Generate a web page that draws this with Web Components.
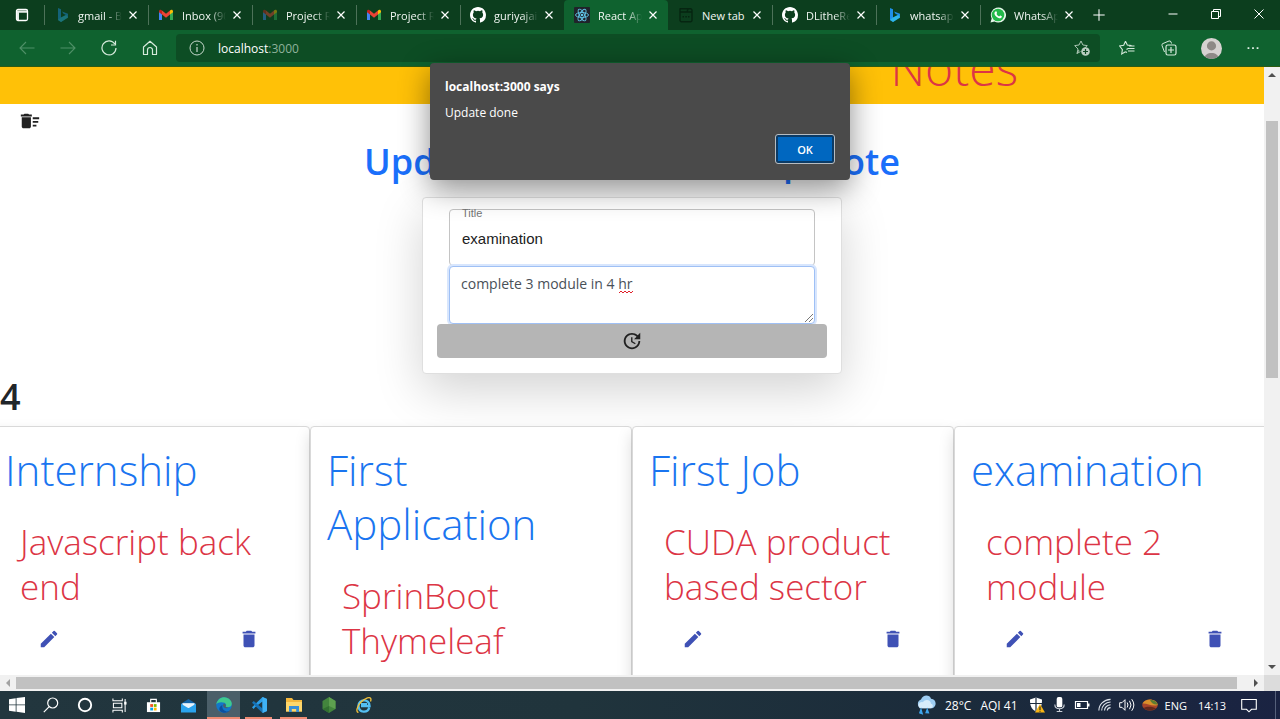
<!DOCTYPE html>
<html lang="en">
<head>
<meta charset="utf-8">
<meta name="viewport" content="width=device-width, initial-scale=1">
<title>React App</title>
<style>
  html, body { margin: 0; height: 100%; }
  body { font-family: "Open Sans", "Noto Sans", sans-serif; font-size: 12px; overflow: hidden; }
</style>
</head>
<body>
<desktop-screen></desktop-screen>

<script>
const ICONS = {
  tabs: '<rect x="2.5" y="2.5" width="11" height="11" rx="1.5" fill="none" stroke="#fff" stroke-width="1.3"/><path d="M2.5 3.5h11v2.200h-11zM2.500 5h2.500v8h-2.500z" fill="#fff" opacity=".9"/>',
  bing: '<path d="M4 1l3 1.200v8.300l5-2.600-2.500-1.200L8 4.500l6 2.300v3.500L7 15l-3-2z" fill="#1f8fe8"/><path d="M7 10.500l5-2.600L14 10v.8L7 15l-3-2z" fill="#35c6e8" opacity=".7"/>',
  gmail: '<path d="M1 4v9h3V7z" fill="#4285f4"/><path d="M12 7v6h3V4z" fill="#34a853"/><path d="M4 3.500L8 6.700l4-3.200v4L8 10.700 4 7.500z" fill="#ea4335"/><path d="M1 4.500C1 2.500 3 2.500 4 3.500v4L1 5.300z" fill="#c5221f"/><path d="M15 4.500c0-2-2-2-3-1v4l3-2.200z" fill="#fbbc04"/>',
  github: '<path fill="#fff" d="M8 0C3.580 0 0 3.580 0 8c0 3.540 2.290 6.530 5.470 7.590.4.070.55-.17.55-.38v-1.490c-2.230.48-2.700-.95-2.700-.95-.36-.92-.89-1.170-.89-1.170-.73-.5.05-.49.05-.49.8.060 1.230.83 1.230.83.71 1.230 1.870.87 2.330.66.070-.52.28-.87.51-1.070-1.780-.2-3.640-.89-3.640-3.950 0-.87.31-1.590.82-2.150-.08-.2-.36-1.020.08-2.120 0 0 .67-.21 2.200.82a7.600 7.600 0 014 0c1.530-1.040 2.200-.82 2.200-.82.44 1.100.16 1.920.08 2.120.51.56.82 1.270.82 2.150 0 3.070-1.870 3.750-3.650 3.950.29.25.54.73.54 1.480v2.200c0 .21.15.46.55.38A8 8 0 0016 8c0-4.420-3.580-8-8-8z"/>',
  react: '<rect width="16" height="16" rx="1" fill="#20232a"/><g fill="none" stroke="#61c5e8" stroke-width=".9"><ellipse cx="8" cy="8" rx="6.500" ry="2.500"/><ellipse cx="8" cy="8" rx="6.500" ry="2.500" transform="rotate(60 8 8)"/><ellipse cx="8" cy="8" rx="6.500" ry="2.500" transform="rotate(120 8 8)"/></g><circle cx="8" cy="8" r="1.300" fill="#61c5e8"/>',
  newtab: '<g fill="none" stroke="#062511" stroke-width="1.400"><path d="M2.500 1.700h10a1.500 1.500 0 011.500 1.500v10a1.500 1.500 0 01-1.500 1.500H3.500A1.500 1.500 0 012 13.200V2zM2 5h7l1-3M9 5h5"/></g><path d="M4.500 9h1.500v1.500H4.500zM7.300 9h1.500v1.500H7.300zM10 9h1.500v1.500H10z" fill="#062511"/>',
  whatsapp: '<path d="M.5 15.500l1.200-4A7.600 7.600 0 118 15.600a8 8 0 01-3.500-1z" fill="#e6f7ea"/><circle cx="8" cy="8" r="6.300" fill="#22b94a"/><path d="M5.500 4.500c.7-.4 1 0 1.500 1.300.2.700-.6.900-.5 1.300.6 1.200 1.500 1.900 2.600 2.300.5 0 .8-1 1.300-.8 1.400.6 1.700.8 1.400 1.400-.5 1.300-2 1.500-3.300 1C6.500 10.300 5 8.500 4.500 7c-.2-1 .2-2 1-2.500z" fill="#fff"/>',
  close: '<path d="M4 4l8 8M12 4l-8 8" stroke="#fff" stroke-width="1.400"/>',
  plus: '<path d="M8 1.500v13M1.500 8h13" stroke="#fff" stroke-width="1.200"/>',
  min: '<path d="M3.500 8h9" stroke="#fff"/>',
  restore: '<path d="M3.500 5.500h7v7h-7zM5.500 5.500v-2h7v7h-2" fill="none" stroke="#fff"/>',
  winclose: '<path d="M3.500 3.500l9 9M12.500 3.500l-9 9" stroke="#fff"/>',
  back: '<path d="M15.500 8H1M7 2L1 8l6 6" fill="none" stroke="#4f9068" stroke-width="1.100"/>',
  forward: '<path d="M.5 8H15M9 2l6 6-6 6" fill="none" stroke="#4f9068" stroke-width="1.100"/>',
  reload: '<path d="M13.800 4A7 7 0 1015 8M14.500 .8V5h-4.500" fill="none" stroke="#d5eadb" stroke-width="1.200"/>',
  home: '<path d="M1.500 7L8 1.300 14.500 7v7.500h-4V10a2.500 2.500 0 00-5 0v4.500h-4z" fill="none" stroke="#d5eadb" stroke-width="1.200" stroke-linejoin="round"/>',
  info: '<circle cx="8" cy="8" r="7" fill="none" stroke="#c5d8cb"/><path d="M8 7v5M8 4v1.500" stroke="#c5d8cb" stroke-width="1.200"/>',
  staradd: '<path d="M7 1l1.900 4 4.400.6-3.200 3M5 10l-2 3.500 1-4.500L.7 5.600 5 5 7 1M3 13.500l3.500-2" fill="none" stroke="#a9c4b1"/><circle cx="11.500" cy="11.500" r="4.300" fill="#b9cdbf"/><path d="M11.500 9v5M9 11.500h5" stroke="#0e4a24" stroke-width="1.200"/>',
  favs: '<path d="M6.500 1.200L8.300 5l4.200.6M9 8.500l-1.500 1M6.500 11.800L2.700 14l.7-4.300L.6 6l4.100-.8 1.800-4M9 8.500h6.500M9 11h6.500M10 6h5.500M6.500 11.800L8 12.500" fill="none" stroke="#d5eadb" stroke-width="1.100"/>',
  collections: '<path d="M3.500 12L1 5.500Q.5 4 2 3.500L8 1q1.500-.5 2 1l.5 1.500" fill="none" stroke="#d5eadb"/><rect x="5" y="5" width="10" height="10" rx="1.800" fill="none" stroke="#d5eadb" stroke-width="1.200"/><path d="M10 7v6M7 10h6" stroke="#d5eadb" stroke-width="1.200"/>',
  avatar: '<clipPath id="c"><circle cx="8" cy="8" r="8"/></clipPath><g clip-path="url(#c)"><path d="M0 0h16v16H0z" fill="#d6d2d1"/><circle cx="8" cy="6" r="3.500" fill="#8e8987"/><path d="M2.500 16c0-6 11-6 11 0z" fill="#8e8987"/></g>',
  dots: '<path d="M1.800 7.200h2v2h-2zM7 7.200h2v2H7zM12.200 7.200h2v2h-2z" fill="#e4f1e8"/>',
  sweep: '<path d="M15 16h4v2h-4zm0-8h7v2h-7zm0 4h6v2h-6zM3 18c0 1.100.9 2 2 2h6c1.100 0 2-.9 2-2V8H3v10zM14 5h-3l-1-1H6L5 5H2v2h12z" fill="#212121"/>',
  update: '<path d="M21 10.120h-6.780l2.740-2.820c-2.730-2.700-7.150-2.800-9.880-.1-2.730 2.710-2.730 7.080 0 9.790s7.150 2.710 9.880 0C18.320 15.650 19 14.080 19 12.100h2c0 1.980-.88 4.550-2.640 6.290-3.510 3.480-9.210 3.480-12.720 0-3.500-3.470-3.530-9.110-.02-12.580s9.140-3.470 12.650 0L21 3v7.120zM12.500 8v4.250l3.500 2.080-.72 1.210L11 13V8h1.500z" fill="#212121"/>',
  edit: '<path d="M3 17.250V21h3.750L17.810 9.940l-3.750-3.750L3 17.250zM20.710 7.040a1 1 0 000-1.410l-2.340-2.340a1 1 0 00-1.410 0l-1.830 1.830 3.750 3.750 1.830-1.830z" fill="#3f51b5"/>',
  trash: '<path d="M6 19c0 1.100.9 2 2 2h8c1.100 0 2-.9 2-2V7H6v12zM19 4h-3.500l-1-1h-5l-1 1H5v2h14V4z" fill="#3f51b5"/>',
  windows: '<path d="M0 2.200L6.700 1.200v6.300H0zM7.500 1.100L16 0v7.500H7.500zM0 8.300h6.700v6.400L0 13.800zM7.500 8.300H16V16l-8.500-1.200z" fill="#fff"/>',
  search: '<circle cx="9.700" cy="6" r="5" fill="none" stroke="#fff" stroke-width="1.200"/><path d="M6.200 9.700L.8 15.200" stroke="#fff" stroke-width="1.200"/>',
  cortana: '<circle cx="8" cy="8" r="6.200" fill="none" stroke="#fff" stroke-width="1.900"/>',
  taskview: '<path d="M1 .5V3h10V.5M1 15.500V13h10v2.500M1.500 5.500h9v5h-9zM14 1v14" fill="none" stroke="#fff" stroke-width="1.100"/><path d="M13 4h2.500v3H13z" fill="#fff"/>',
  store: '<path d="M5 5V1.500h6V5" fill="none" stroke="#fff" stroke-width="1.200"/><path d="M1 4.500h14V15H1z" fill="#fff"/><path d="M4.500 6.500h3v3h-3z" fill="#f25022"/><path d="M8.300 6.500h3v3h-3z" fill="#7fba00"/><path d="M4.500 10.300h3v3h-3z" fill="#00a4ef"/><path d="M8.300 10.300h3v3h-3z" fill="#ffb900"/>',
  mail: '<path d="M0 6l8-5 8 5v9H0z" fill="#1565a8"/><path d="M1.500 5.500h13V11h-13z" fill="#e8f4fd"/><path d="M0 6l8 5 8-5v9.500H0z" fill="#2aa3ee"/>',
  edge: '<circle cx="8" cy="8" r="7.800" fill="#1377c9"/><path d="M.3 7.500C1 2.500 5 0 8.500.2c4 .2 7.500 3.300 7.300 6.800C15.700 10 12 11 9.500 9.800c1-1 1-3-1-4C6 4.700 1.500 5 .3 7.500z" fill="#3fc98e"/><path d="M6.500 8c-1 3 1 6 4 6.500 2 .2 3.500-.7 4.200-1.700C12.500 16 7 17 4 14c-1.500-2-.5-5 2.500-6z" fill="#0c4f9e"/><path d="M8 6.500c1.500.3 2.200 1.800 1.500 3 .6.900 2 1.300 3.500 1.100-2 1.200-5.300.8-5.800-1.300-.1-1.200 0-2 .8-2.800z" fill="#4b5f69"/>',
  vscode: '<path d="M11.500 0L16 2v12l-4.500 2V4.500L4 10.300 2.700 11.900 1 10.300 11.500 0z" fill="#2c9fe8"/><path d="M1 5.700L2.700 4.100 11.500 11.500V16z" fill="#1673b8"/><path d="M11.500 0L16 2v12l-4.500 2z" fill="#3fb2f5"/>',
  explorer: '<path d="M0 1h6l1.500 2H16v11.500H0z" fill="#f5b83d"/><path d="M0 5h16v9.500H0z" fill="#ffd76b"/><path d="M3 15V9h10v6h-2.800v-3H5.800v3z" fill="#3a8fd6"/>',
  node: '<path d="M8 0l6.500 4v8L8 16l-6.500-4V4z" fill="#43853d"/><path d="M8 0l6.500 4v8L8 9z" fill="#5da04f"/><path d="M1.500 12L8 9v7z" fill="#327031"/>',
  ie: '<path d="M13.200 10.500C12 16 3 16.500 2.500 9 2.300 2 13.500 1 13.500 9H5M5 7.200h6" fill="none" stroke="#54bff2" stroke-width="2.400"/><path d="M2.500 15.500C-1.500 15 2.500 5 9.500 1.800 13.500-.2 16 .6 14.500 4.500" fill="none" stroke="#f5c33b" stroke-width="1.300"/>',
  weather: '<path d="M4 10.500a3.700 3.700 0 010-7C5.500-.5 11-.5 12 3c4.500.2 5 6 1 7.500z" fill="#9ecdf2"/><path d="M3 10.500C.5 8 3 5 5.500 5.800 7.500 2.500 12 4 12 7c2 .3 2 3 0 3.500z" fill="#d7ecfb"/><path d="M4 11.500l1 3.500-2-.7zM9 11.500l1 2.800-2-.2z" fill="#3fa5ee" stroke="#3fa5ee"/>',
  shield: '<path d="M7 .5l6 2c0 6-1 9.500-6 12-5-2.500-6-6-6-12z" fill="#fff"/><path d="M7 .5v14M1 6.500h12" stroke="#1d2b3d" stroke-width="1.200"/><path d="M11 7l5 8.500H6z" fill="#f9b513"/><path d="M11 9.500V13M11 13.800v1" stroke="#222" stroke-width="1.100"/>',
  mic: '<rect x="5" y="0" width="6" height="11" rx="2" fill="#fff"/><path d="M3 8c0 6 10 6 10 0M8 13v2M5 15.500h6" fill="none" stroke="#c9ced6" stroke-width="1.200"/>',
  battery: '<path d="M1.500 4.500h12v7h-12z" fill="none" stroke="#fff" stroke-width="1.200"/><path d="M3 6h3.500v4H3zM14 6.500h1.500v3H14z" fill="#fff"/>',
  wifi: '<path d="M2 14.500C2 8 7 3 14.500 2.500M5 14.500c0-5 4-9 9.500-9.200M8 14.500c0-3.500 3-6 6.500-6.200M11 14.500c0-2 1.500-3 3.500-3.200" fill="none" stroke="#dde2ea" stroke-width="1.200"/>',
  sound: '<path d="M.7 5.700H3L6 2.700v10.600l-3-3H.7zM8.200 5.500q1.500 2.500 0 5M10.500 3.800q3 4.200 0 8.400M12.700 2.200q4.300 5.800 0 11.600" fill="none" stroke="#fff"/>',
  planet: '<ellipse cx="8" cy="8" rx="7.800" ry="5.500" fill="#a8452a"/><path d="M.5 6.500C4 0 15 2 15.700 8 10 10 5 6 .5 6.500z" fill="#d98f2b"/><path d="M8 3c4-.5 7 2 7.500 4.500-3 .5-6-1-7.500-4.500z" fill="#5d7d32"/><path d="M1.500 11C5 9 11 9.500 14 11.500c-3 2.500-10 2.500-12.500-.5z" fill="#63281c"/>',
  note: '<path d="M.7 2.500h14.600v9.800H10.500L8 14.800 5.500 12.300H.7z" fill="none" stroke="#fff" stroke-width="1.100"/>',
  up: '<path d="M4 10l4-4 4 4z" fill="#505050"/>',
  down: '<path d="M4 6l4 4 4-4z" fill="#505050"/>',
  left: '<path d="M10 4L6 8l4 4z" fill="#a3a3a3"/>',
  right: '<path d="M6 4l4 4-4 4z" fill="#505050"/>'
};
const WIDE = new Set(['sweep', 'update', 'edit', 'trash']);

class UiIcon extends HTMLElement {
  constructor() {
    super();
    this.attachShadow({ mode: 'open' });
  }
  connectedCallback() {
    const name = this.getAttribute('name');
    const size = this.getAttribute('size') || 16;
    const box = WIDE.has(name) ? 24 : 16;
    this.shadowRoot.innerHTML = `<style>:host{display:inline-flex;flex:none}svg{display:block}</style>
      <svg width="${size}" height="${size}" viewBox="0 0 ${box} ${box}" aria-hidden="true">${ICONS[name]}</svg>`;
  }
}
customElements.define('ui-icon', UiIcon);

const RESET = `
  *, *::before { box-sizing: border-box; }
  button { border: 0; background: none; padding: 0; margin: 0; font: inherit; color: inherit;
    display: inline-flex; align-items: center; justify-content: center; }
  h1, h2, p { margin: 0; }
`;

function define(name, html) {
  const template = document.createElement('template');
  template.innerHTML = html;
  customElements.define(name, class extends HTMLElement {
    constructor() {
      super();
      this.attachShadow({ mode: 'open' }).append(template.content.cloneNode(true));
    }
  });
}

/* One browser tab: slot "icon" for the favicon, default slot for the title. */
define('browser-tab', `<style>${RESET}
  :host { flex: 0 1 104px; min-width: 0; display: flex; align-items: center; padding: 0 8px 0 10px;
    box-sizing: border-box; color: #f1f6f2; font-size: 11px; position: relative; }
  :host([line])::before { content: ""; width: 1px; height: 20px; background: #4d7259; position: absolute; left: 0; top: 5px; }
  :host([active]) { background: #0f622f; border-radius: 4px 4px 0 0; }
  :host([dim]) ::slotted(ui-icon) { opacity: .45; }
  .title { flex: 1; min-width: 0; margin-left: 8px; overflow: hidden; white-space: nowrap; }
  :host([fade]) .title { -webkit-mask-image: linear-gradient(90deg, #000 28px, transparent 44px); mask-image: linear-gradient(90deg, #000 28px, transparent 44px); }
</style>
<slot name="icon"></slot><span class="title"><slot></slot></span>
<button aria-label="Close tab"><ui-icon name="close" size="14"></ui-icon></button>`);

define('tab-strip', `<style>${RESET}
  :host { display: flex; height: 30px; background: #0c3e1e; }
  .menu { width: 44px; }
  .tabs { display: flex; flex: 0 1 1040px; min-width: 0; }
  .new { width: 30px; }
  .controls { margin-left: auto; display: flex; }
  .controls button { width: 43px; height: 27px; }
</style>
<button class="menu" aria-label="Tab actions"><ui-icon name="tabs"></ui-icon></button>
<div class="tabs">
  <browser-tab line dim fade><ui-icon slot="icon" name="bing"></ui-icon>gmail - Bing</browser-tab>
  <browser-tab line fade><ui-icon slot="icon" name="gmail"></ui-icon>Inbox (90)</browser-tab>
  <browser-tab line dim fade><ui-icon slot="icon" name="gmail"></ui-icon>Project R</browser-tab>
  <browser-tab line fade><ui-icon slot="icon" name="gmail"></ui-icon>Project R</browser-tab>
  <browser-tab line fade><ui-icon slot="icon" name="github"></ui-icon>guriyajai</browser-tab>
  <browser-tab active fade><ui-icon slot="icon" name="react"></ui-icon>React App</browser-tab>
  <browser-tab><ui-icon slot="icon" name="newtab"></ui-icon>New tab</browser-tab>
  <browser-tab line fade><ui-icon slot="icon" name="github"></ui-icon>DLitheRe</browser-tab>
  <browser-tab line fade><ui-icon slot="icon" name="bing"></ui-icon>whatsapp</browser-tab>
  <browser-tab line fade><ui-icon slot="icon" name="whatsapp"></ui-icon>WhatsApp</browser-tab>
</div>
<button class="new" aria-label="New tab"><ui-icon name="plus" size="14"></ui-icon></button>
<div class="controls">
  <button aria-label="Minimize"><ui-icon name="min"></ui-icon></button>
  <button aria-label="Restore"><ui-icon name="restore"></ui-icon></button>
  <button aria-label="Close"><ui-icon name="winclose"></ui-icon></button>
</div>`);

define('address-row', `<style>${RESET}
  :host { display: flex; align-items: center; height: 37px; background: #0f622f; padding: 0 6px;
    border-bottom: 1px solid #2f5c12; box-sizing: border-box; }
  button { width: 41px; height: 30px; }
  .bar ~ button { width: 42px; }
  .bar { flex: 1; min-width: 0; height: 28px; margin: 0 6px; padding: 0 10px 0 13px; display: flex; align-items: center;
    gap: 13px; border-radius: 4px; background: #0d4d24; color: #8fb29b; }
  .url { flex: 1; color: inherit; text-decoration: none; }
  b { font-weight: 400; color: #fff; }
</style>
<button aria-label="Back"><ui-icon name="back"></ui-icon></button>
<button aria-label="Forward"><ui-icon name="forward"></ui-icon></button>
<button aria-label="Refresh"><ui-icon name="reload"></ui-icon></button>
<button aria-label="Home"><ui-icon name="home"></ui-icon></button>
<div class="bar"><ui-icon name="info"></ui-icon><a class="url" href="#"><b>localhost</b>:3000</a><ui-icon name="staradd"></ui-icon></div>
<button aria-label="Favorites"><ui-icon name="favs"></ui-icon></button>
<button aria-label="Collections"><ui-icon name="collections"></ui-icon></button>
<button aria-label="Profile"><ui-icon name="avatar" size="21"></ui-icon></button>
<button aria-label="More"><ui-icon name="dots" size="14"></ui-icon></button>`);

define('alert-dialog', `<style>${RESET}
  :host { position: absolute; z-index: 2; top: -4px; left: 0; right: 0; margin: 0 auto; width: 420px; height: 117px;
    box-sizing: border-box; padding: 15px 16px 17px 15px; display: flex; flex-direction: column; background: #4a4a4a; color: #fff;
    border-radius: 4px; box-shadow: 0 8px 30px rgba(0,0,0,.45); }
  h2 { font-size: 12px; line-height: 18px; font-weight: 700; }
  p { margin-top: 8px; line-height: 18px; }
  button { align-self: flex-end; margin-top: auto; width: 58px; height: 28px; background: #0067c0; font-size: 11px; font-weight: 600;
    border: 2px solid #0b3b66; border-radius: 2px; outline: 1px solid #b5bcc2; }
</style>
<h2><slot name="title"></slot></h2>
<p><slot></slot></p>
<button>OK</button>`);

define('note-form', `<style>${RESET}
  :host { display: block; width: 420px; max-width: 100%; box-sizing: border-box; margin: 0 auto; padding: 11px 14px 15px;
    border: 1px solid #dfdfdf; border-radius: 4px; background: #fff; box-shadow: 0 16px 48px rgba(0,0,0,.175); }
  .field { position: relative; margin: 0 12px; }
  label { position: absolute; left: 13px; top: -2px; font: 11px/12px "Liberation Sans", Arial, sans-serif; color: #757575; }
  input, textarea { display: block; width: 100%; margin: 0; outline: 0; border-radius: 4px; background: #fff; }
  input { height: 57px; padding: 2px 12px 0; border: 1px solid #c4c4c4; font: 15px "Liberation Sans", Arial, sans-serif; color: #212121; }
  textarea { height: 58px; padding: 5px 11px; border: 1px solid #9fc0f5; box-shadow: 0 0 0 2px #d8e6fd;
    font: 14px/24px "Open Sans", sans-serif; color: #495057; resize: none; }
  .wave { position: absolute; left: 170px; top: 24px; }
  .grip { position: absolute; right: 2px; bottom: 2px; }
  .save { width: 100%; height: 34px; border-radius: 4px; background: #b5b5b5; position: relative; }
</style>
<div class="field"><input id="title" value="examination"><label for="title">Title</label></div>
<div class="field"><textarea id="body" aria-label="Note text" spellcheck="false">complete 3 module in 4 hr</textarea>
  <svg class="wave" width="14" height="4" aria-hidden="true"><path d="M0 3l2-2 2 2 2-2 2 2 2-2 2 2 2-2" fill="none" stroke="#e0202a"/></svg>
  <svg class="grip" width="8" height="8" aria-hidden="true"><path d="M0 8l8-8M4 8l4-4" stroke="#777"/></svg>
</div>
<button class="save" aria-label="Update note"><ui-icon name="update" size="22"></ui-icon></button>`);

define('note-card', `<style>${RESET}
  :host { display: block; box-sizing: border-box; min-width: 0; padding: 16px; border: 1px solid #d9d9d9; border-radius: 4px;
    background: #fff; box-shadow: 0 8px 16px rgba(0,0,0,.15); }
  h2 { font-size: 42px; line-height: 54px; font-weight: 300; color: #1a75f0; margin-bottom: 8px; }
  .text { padding: 14px 15px 6px; }
  p { font-size: 35px; line-height: 45px; font-weight: 300; color: #dc3545; }
  .actions { display: flex; justify-content: space-between; padding: 0 20px; }
  .actions button { width: 48px; height: 48px; }
</style>
<h2><slot name="title"></slot></h2>
<div class="text"><p><slot></slot></p></div>
<div class="actions">
  <button aria-label="Edit note"><ui-icon name="edit" size="22"></ui-icon></button>
  <button aria-label="Delete note"><ui-icon name="trash" size="22"></ui-icon></button>
</div>`);

define('notes-page', `<style>${RESET}
  :host { display: block; min-width: 0; overflow: hidden; background: #fff; color: #212529; }
  .banner { display: flex; justify-content: flex-end; align-items: flex-end; height: 37px; padding-right: 246px; overflow: hidden; background: #ffc107; }
  .banner h1 { font-size: 48px; line-height: 72px; font-weight: 300; color: #dc3545; }
  .clear { width: 60px; height: 34px; }
  .heading { text-align: center; font-size: 36px; line-height: 46px; font-weight: 600; color: #1a6ffb; margin: 1px 0 12px; white-space: nowrap; }
  .count { font-size: 36px; line-height: 46px; font-weight: 600; padding-bottom: 2px; }
  .row { display: grid; grid-template-columns: repeat(4, minmax(0, 1fr)); margin: 4px -12px 0; min-height: 320px; }
</style>
<header class="banner"><h1>Notes</h1></header>
<button class="clear" aria-label="Delete all"><ui-icon name="sweep" size="22"></ui-icon></button>
<h1 class="heading">Update Your Text in Keep Note</h1>
<note-form></note-form>
<h1 class="count">4</h1>
<section class="row">
  <note-card><span slot="title">Internship</span>Javascript back end</note-card>
  <note-card><span slot="title">First Application</span>SprinBoot Thymeleaf</note-card>
  <note-card><span slot="title">First Job</span>CUDA product based sector</note-card>
  <note-card><span slot="title">examination</span>complete 2 module</note-card>
</section>`);

define('scroll-bar', `<style>
  :host { display: flex; background: #f1f1f1; box-sizing: border-box; }
  :host([vertical]) { flex-direction: column; }
  .track { flex: 1; display: flex; flex-direction: inherit; }
  .before { flex: var(--before, 0) 0 0; }
  .thumb { flex: var(--thumb, 1) 0 0; background: #c1c1c1; margin: 2px 0; }
  :host([vertical]) .thumb { margin: 0 2px; }
  .after { flex: var(--after, 0) 0 0; }
</style>
<slot name="start"></slot>
<div class="track"><div class="before"></div><div class="thumb"></div><div class="after"></div></div>
<slot name="end"></slot>`);

define('task-bar', `<style>${RESET}
  :host { display: flex; align-items: stretch; height: 28px; color: #fff;
    background: linear-gradient(90deg, #22363e, #20343c 45%, #1b2b3b 75%, #1a2342); }
  .start button { width: 34px; height: 28px; }
  .apps button { width: 35px; height: 28px; border-bottom: 2px solid transparent; border-top: 2px solid transparent; }
  .apps .open { border-bottom-color: #ef8b72; background-clip: padding-box; }
  .apps .current { background: #4b5f69; border-color: #4b5f69; border-bottom-color: #ef8b72; background-clip: border-box; }
  .start, .apps { display: flex; }
  .apps .open { width: 27px; margin: 0 4px; }
  .apps .current { width: 33px; margin: 0 1px; }
  .tray { margin-left: auto; display: flex; align-items: center; padding-right: 4px; }
  .weather { gap: 9px; font-size: 12px; margin-right: 11px; white-space: nowrap; }
  .icons { display: flex; gap: 7px; margin-right: 7px; }
  .lang { font-size: 11px; margin-right: 11px; }
  time { font-size: 11px; margin-right: 15px; }
  .end { width: 1px; height: 28px; margin-left: 18px; background: #55607a; }
</style>
<nav class="start">
  <button aria-label="Start"><ui-icon name="windows"></ui-icon></button>
  <button aria-label="Search"><ui-icon name="search"></ui-icon></button>
  <button aria-label="Cortana"><ui-icon name="cortana"></ui-icon></button>
  <button aria-label="Task view"><ui-icon name="taskview" size="15"></ui-icon></button>
</nav>
<nav class="apps">
  <button aria-label="Store"><ui-icon name="store" size="15"></ui-icon></button>
  <button aria-label="Mail"><ui-icon name="mail" size="15"></ui-icon></button>
  <button class="current" aria-label="Edge"><ui-icon name="edge"></ui-icon></button>
  <button class="open" aria-label="Visual Studio Code"><ui-icon name="vscode"></ui-icon></button>
  <button class="open" aria-label="File Explorer"><ui-icon name="explorer"></ui-icon></button>
  <button aria-label="Node"><ui-icon name="node"></ui-icon></button>
  <button aria-label="Internet Explorer"><ui-icon name="ie"></ui-icon></button>
</nav>
<div class="tray">
  <button class="weather"><ui-icon name="weather" size="20"></ui-icon><span>28°C</span><span>AQI 41</span></button>
  <div class="icons">
    <ui-icon name="shield"></ui-icon><ui-icon name="mic" size="15"></ui-icon><ui-icon name="battery"></ui-icon>
    <ui-icon name="wifi" size="15"></ui-icon><ui-icon name="sound"></ui-icon><ui-icon name="planet"></ui-icon>
  </div>
  <span class="lang">ENG</span>
  <time datetime="14:13">14:13</time>
  <button aria-label="Notifications"><ui-icon name="note"></ui-icon></button>
  <span class="end"></span>
</div>`);

define('desktop-screen', `<style>${RESET}
  :host { display: flex; flex-direction: column; height: 100vh; }
  .view { position: relative; flex: 1; min-height: 0; display: grid; grid-template: minmax(0, 1fr) 16px / minmax(0, 1fr) 16px; }
  .corner { background: #dcdcdc; }
  .v { --before: 38; --thumb: 256; --after: 280; }
  .h { --before: 0; --thumb: 1221; --after: 11; }
</style>
<tab-strip></tab-strip>
<address-row></address-row>
<main class="view">
  <notes-page></notes-page>
  <scroll-bar class="v" vertical><ui-icon slot="start" name="up"></ui-icon><ui-icon slot="end" name="down"></ui-icon></scroll-bar>
  <scroll-bar class="h"><ui-icon slot="start" name="left"></ui-icon><ui-icon slot="end" name="right"></ui-icon></scroll-bar>
  <div class="corner"></div>
  <alert-dialog role="alertdialog"><span slot="title">localhost:3000 says</span>Update done</alert-dialog>
</main>
<task-bar></task-bar>`);
</script>
</body>
</html>
